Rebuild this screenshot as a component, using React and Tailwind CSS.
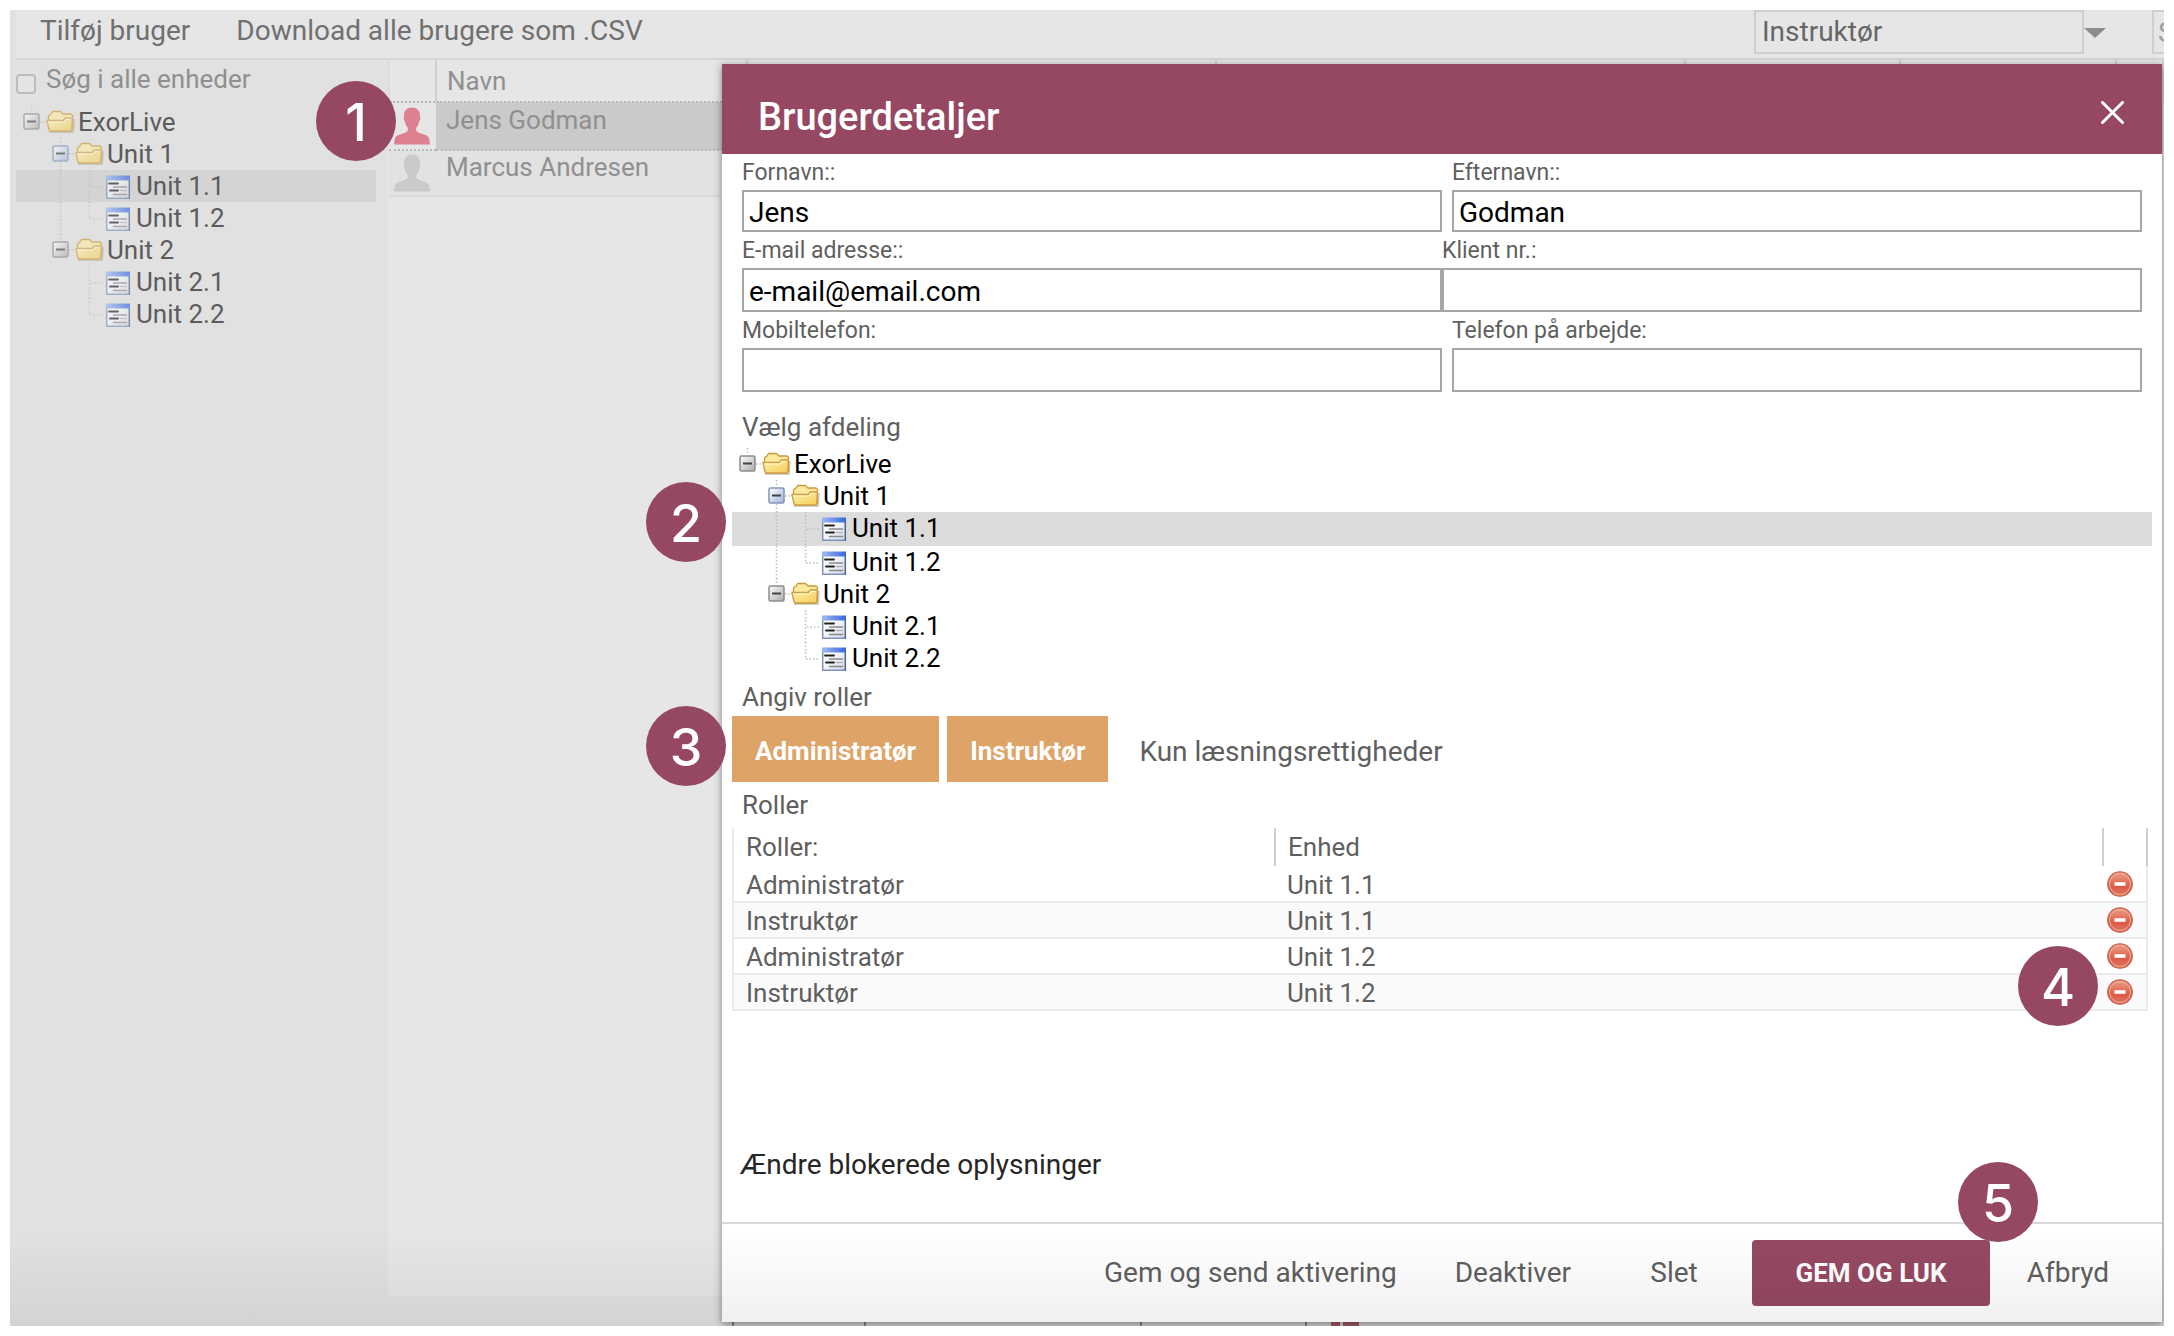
import React, { useState } from 'react';

const UNITS = [
  { id: 'root', label: 'ExorLive', level: 0 },
  { id: 'u1', label: 'Unit 1', level: 1, active: true },
  { id: 'u11', label: 'Unit 1.1', level: 2, leaf: true, rail: true },
  { id: 'u12', label: 'Unit 1.2', level: 2, leaf: true, rail: true, last: true },
  { id: 'u2', label: 'Unit 2', level: 1, last: true },
  { id: 'u21', label: 'Unit 2.1', level: 2, leaf: true },
  { id: 'u22', label: 'Unit 2.2', level: 2, leaf: true, last: true },
];

const USERS = [
  { id: 1, name: 'Jens Godman' },
  { id: 2, name: 'Marcus Andresen' },
];

// columns of the user list that carry no data yet
const EXTRA_COLUMNS = ['c1', 'c2', 'c3', 'c4', 'c5'];

const ROLES = [
  { id: 1, role: 'Administratør', unit: 'Unit 1.1' },
  { id: 2, role: 'Instruktør', unit: 'Unit 1.1' },
  { id: 3, role: 'Administratør', unit: 'Unit 1.2' },
  { id: 4, role: 'Instruktør', unit: 'Unit 1.2' },
];

const GradientDefs = () => (
  <svg width="0" height="0" className="absolute" aria-hidden="true">
    <defs>
      <linearGradient id="folder" x1="0" y1="0" x2="1" y2="1">
        <stop offset="0" stopColor="#fff3b0" />
        <stop offset="1" stopColor="#f3cc58" />
      </linearGradient>
      <linearGradient id="toggle" x1="0" y1="0" x2="1" y2="1">
        <stop offset="0" stopColor="#ffffff" />
        <stop offset="1" stopColor="#a9a9a9" />
      </linearGradient>
      <linearGradient id="toggleActive" x1="0" y1="0" x2="1" y2="1">
        <stop offset="0" stopColor="#ffffff" />
        <stop offset="1" stopColor="#9db4d6" />
      </linearGradient>
      <linearGradient id="sheet" x1="0" y1="0" x2="1" y2="1">
        <stop offset="0.3" stopColor="#ffffff" />
        <stop offset="1" stopColor="#cdd6e6" />
      </linearGradient>
      <linearGradient id="sheetBar" x1="0" y1="0" x2="1" y2="0">
        <stop offset="0" stopColor="#9db9f4" />
        <stop offset="1" stopColor="#3767dc" />
      </linearGradient>
      <linearGradient id="remove" x1="0" y1="0" x2="0" y2="1">
        <stop offset="0" stopColor="#eea48c" />
        <stop offset="0.6" stopColor="#dc5a48" />
        <stop offset="1" stopColor="#e07a62" />
      </linearGradient>
    </defs>
  </svg>
);

const FolderIcon = () => (
  <svg width="32" height="32" viewBox="0 0 32 32" className="shrink-0" aria-hidden="true">
    <path d="M3 26h24l1-13" fill="none" stroke="#000" strokeOpacity="0.18" strokeWidth="2" />
    <path
      d="M2.500 22V10l2.500-2 1.500-2.500h8L17 8h8l1.500 1.500v14L25 25H4z"
      fill="#fbe9a0"
      stroke="#c9973c"
      strokeWidth="1.300"
      strokeLinejoin="round"
    />
    <path d="M.8 14.500h16.500l2-2.500h7l-.5 12-1.300 1H3.500z" fill="url(#folder)" stroke="#cf9f45" strokeWidth="1.300" strokeLinejoin="round" />
    <path d="M2.500 16h15.500l2-2.500h4.500" fill="none" stroke="#fff8cf" strokeWidth="1.200" />
  </svg>
);

const UnitIcon = () => (
  <svg width="32" height="32" viewBox="0 0 32 32" className="shrink-0" aria-hidden="true">
    <path d="M2 6h24v23H2z" fill="url(#sheet)" />
    <path d="M2.700 6v22M2 28.200h24" stroke="#7f92b8" strokeWidth="1.500" />
    <path d="M25.300 6v23" stroke="#4d648f" strokeWidth="1.500" />
    <path d="M2 5.500h24v5H2z" fill="url(#sheetBar)" />
    <path d="M5 13.500h9M6 20.500h8" stroke="#222" strokeWidth="1.800" strokeLinecap="round" />
    <path d="M9.500 17h13M9.500 24.500h13" stroke="#8a8a8a" strokeWidth="1.600" strokeLinecap="round" />
    <path d="M16 20.500h6.500" stroke="#aaa" strokeWidth="1.200" />
  </svg>
);

const ToggleCell = ({ level, active, last }) => (
  <svg width="29" height="32" viewBox="0 0 29 32" className="shrink-0 overflow-visible" aria-hidden="true">
    <g stroke="#bdbdbd" strokeWidth="1.500" strokeDasharray="1.500 2">
      <path d="M14.500 0v6M23 16h5" />
      {level > 0 && !last && <path d="M14.500 24v10" />}
    </g>
    <rect x="7" y="8" width="15" height="15" rx="1.500" fill={active ? 'url(#toggleActive)' : 'url(#toggle)'} stroke={active ? '#8296b8' : '#8c8c8c'} strokeWidth="1.500" />
    <path d="M10 15.500h9" stroke="#444" strokeWidth="2" />
  </svg>
);

const LineCell = ({ kind }) => (
  <svg width="29" height="32" viewBox="0 0 29 32" className="shrink-0 overflow-visible" aria-hidden="true">
    <g fill="none" stroke="#bdbdbd" strokeWidth="1.500" strokeDasharray="1.500 2">
      {kind === 'rail' && <path d="M14.500 0v33" />}
      {kind === 'tee' && <path d="M14.500 0v33M16 17h12" />}
      {kind === 'elbow' && <path d="M14.500 0v17h13" />}
    </g>
  </svg>
);

const PersonIcon = ({ className }) => (
  <svg width="36" height="38" viewBox="0 0 36 38" className={className} aria-hidden="true">
    <path
      fill="currentColor"
      d="M18 .5c5.200 0 8 3.300 8 8.200 0 1.300.3 1.800.3 3.100 0 1.600-1 2.200-1.300 3.400-.5 2.300-1.400 3.800-2.700 5.300-.5 2.500.2 4.200 1.900 5 3.300 1.500 8.600 2 10.300 4.700 1.100 1.800 1.300 4.500 1.300 7.300H.2c0-2.800.2-5.500 1.300-7.300 1.700-2.700 7-3.200 10.300-4.700 1.700-.8 2.400-2.500 1.900-5-1.300-1.500-2.200-3-2.700-5.300-.3-1.200-1.300-1.800-1.300-3.400 0-1.300.3-1.800.3-3.100 0-4.900 2.800-8.200 8-8.200z"
    />
  </svg>
);

const RemoveIcon = () => (
  <svg width="26" height="26" viewBox="0 0 26 26" aria-hidden="true">
    <circle cx="13" cy="13" r="12.200" fill="url(#remove)" stroke="#c9604e" strokeWidth="1.300" />
    <circle cx="13" cy="13" r="10.500" fill="none" stroke="#f0b0a0" strokeWidth="1" />
    <path d="M7.500 13h11" stroke="#fff" strokeWidth="3.600" />
  </svg>
);

const Badge = ({ children, className }) => (
  <span
    className={`absolute z-20 flex size-20 items-center justify-center rounded-full bg-[#964863] pt-1 font-[Inter,sans-serif] text-[52px] leading-none font-medium text-white ${className}`}
  >
    {children}
  </span>
);

const UnitTree = ({ selected, onSelect, selectedClass, badge }) => (
  <ul>
    {UNITS.map((unit) => (
      <li key={unit.id} className={`relative ${unit.id === selected ? selectedClass : 'h-8'}`}>
        {unit.id === selected && badge}
        <button type="button" onClick={() => onSelect(unit.id)} className="flex h-8 w-full items-center pl-px text-left">
          {unit.level > 0 && <LineCell kind="none" />}
          {unit.level > 1 && <LineCell kind={unit.rail ? 'rail' : 'none'} />}
          {unit.leaf ? (
            <LineCell kind={unit.last ? 'elbow' : 'tee'} />
          ) : (
            <ToggleCell level={unit.level} active={unit.active} last={unit.last} />
          )}
          {unit.leaf ? <UnitIcon /> : <FolderIcon />}
          <span className="text-[26px] leading-8">{unit.label}</span>
        </button>
      </li>
    ))}
  </ul>
);

const Field = ({ id, label, defaultValue, className, inputClass }) => (
  <div className={className}>
    <label htmlFor={id} className="flex h-9 items-center text-[23px] leading-none text-[#5f5f5f]">
      {label}
    </label>
    <input
      id={id}
      type="text"
      defaultValue={defaultValue}
      className={`block w-full border-2 border-[#a6a6a6] bg-white px-[5px] pt-0.5 text-[28px] leading-none text-black outline-none ${inputClass}`}
    />
  </div>
);

const UserAdmin = () => {
  const [unit, setUnit] = useState('u11');

  return (
    <div className="flex min-w-0 flex-col bg-[#e1e1e1] pl-1.5 [grid-area:1/1]">
      <header className="flex h-[50px] items-center border-b-2 border-[#d6d6d6] bg-[#e6e6e6] text-[28px] leading-none text-[#707070]">
        <button type="button" className="px-6 pb-1.5">Tilføj bruger</button>
        <button type="button" className="px-[22px] pb-1.5">Download alle brugere som .CSV</button>
        <div className="ml-auto flex h-full items-start">
          <select
            aria-label="Rolle"
            defaultValue="Instruktør"
            className="h-11 w-[330px] appearance-none border-2 border-[#cecece] bg-transparent px-1.5 text-[#666]"
          >
            <option>Instruktør</option>
          </select>
          <svg width="22" height="44" viewBox="0 0 22 44" className="mr-[46px]" aria-hidden="true">
            <path d="M0 18h22L11 28z" fill="#8c8c8c" />
          </svg>
          {/* runs past the window's right edge */}
          <input
            type="text"
            aria-label="Søg"
            placeholder="Søg"
            className="-mr-[188px] h-11 w-[200px] border-2 border-[#cecece] bg-transparent pl-1 outline-none placeholder:text-[#a0a0a0]"
          />
        </div>
      </header>

      <div className="flex flex-1">
        <aside className="w-[372px] shrink-0 pr-3 text-[#5c5c5c]">
          <label className="flex h-[46px] items-center gap-2.5 text-[26px] leading-none text-[#8f8f8f]">
            <input type="checkbox" className="mt-0.5 size-5 shrink-0 appearance-none rounded-sm border-2 border-[#bcbcbc] bg-[#e4e4e4]" />
            <span className="pb-2">Søg i alle enheder</span>
          </label>
          <div className="[&_span]:text-[#5c5c5c] [&_svg]:opacity-65">
            <UnitTree selected={unit} onSelect={setUnit} selectedClass="h-8 bg-[#d4d4d4]" />
          </div>
        </aside>

        <section className="flex min-w-0 flex-1 flex-col">
          <div className="flex-1 bg-[#e6e6e6]">
            <table className="w-full table-fixed border-collapse text-left text-[26px] leading-none text-[#909090]">
              <colgroup>
                <col className="w-[47px]" />
                <col className="w-[311px]" />
                <col className="w-[469px]" />
                <col className="w-[469px]" />
                <col className="w-[215px]" />
                <col className="w-[216px]" />
                <col />
              </colgroup>
              <thead>
                <tr className="h-[42px]">
                  <th className="border-r-2 border-l-2 border-[#d0d0d0] border-l-[#dcdcdc]" aria-label="Status"></th>
                  <th className="border-r-2 border-[#d0d0d0] pl-2.5 font-normal">Navn</th>
                  {EXTRA_COLUMNS.map((col) => (
                    <th key={col} className="border-r-2 border-[#d0d0d0]"></th>
                  ))}
                </tr>
              </thead>
              <tbody>
                {USERS.map((user, i) => (
                  <tr key={user.id} className={i === 0 ? 'h-[48px] border-y-2 border-dotted border-[#b8b8b8]' : 'h-[46px] border-b-2 border-[#dbdbdb] bg-[#e2e2e2]'}>
                    <td className="relative pl-[5px]">
                      {i === 0 && <Badge className="-top-[22px] -left-[73px]">1</Badge>}
                      <PersonIcon className={i === 0 ? 'text-[#dd8090]' : 'text-[#cacaca]'} />
                    </td>
                    <td className={i === 0 ? 'bg-[#cacaca] pb-3 pl-2.5' : 'pb-3 pl-2.5'}>{user.name}</td>
                    <td colSpan={5} className={i === 0 ? 'bg-[#cacaca]' : ''}></td>
                  </tr>
                ))}
              </tbody>
            </table>
          </div>

          <div className="flex h-[30px] pl-[344px]">
            <div className="w-[132px] border-l-2 border-[#8c8c8c]"></div>
            <div className="w-[276px] border-l-2 border-[#8c8c8c]"></div>
            <div className="w-[165px] border-l-2 border-[#8c8c8c]"></div>
            <div className="flex gap-[3px] border-l-2 border-[#8c8c8c] pl-6">
              <span className="w-[9px] bg-[#b06070]"></span>
              <span className="w-4 bg-[#b06070]"></span>
            </div>
          </div>
        </section>
      </div>
    </div>
  );
};

const UserDialog = () => {
  const [unit, setUnit] = useState('u11');
  const [roles, setRoles] = useState(ROLES);

  const removeRole = (id) => setRoles((prev) => prev.filter((r) => r.id !== id));

  return (
    <div
      role="dialog"
      aria-labelledby="dialog-title"
      className="relative z-10 mt-[54px] mr-0.5 mb-1 ml-[712px] flex min-w-0 flex-col bg-white text-[#5f5f5f] shadow-[0_2px_8px_rgba(0,0,0,0.45)] [grid-area:1/1]"
    >
      <header className="flex h-[90px] items-center justify-between bg-[#964863] pr-[38px] pl-9 text-white">
        <h2 id="dialog-title" className="pt-4 text-[38px] leading-none font-medium">Brugerdetaljer</h2>
        <button type="button" aria-label="Luk" className="pt-1.5">
          <svg width="23" height="23" viewBox="0 0 23 23" aria-hidden="true">
            <path d="M1.500 1.500l20 20M21.500 1.500l-20 20" stroke="#fff" strokeWidth="3" strokeLinecap="round" />
          </svg>
        </button>
      </header>

      <form className="flex flex-1 flex-col" onSubmit={(e) => e.preventDefault()}>
        <div className="grid grid-cols-2 px-5">
          <Field id="first-name" label="Fornavn::" defaultValue="Jens" inputClass="h-[42px]" />
          <Field id="last-name" label="Efternavn::" defaultValue="Godman" className="pl-2.5" inputClass="h-[42px]" />
          <Field id="email" label="E-mail adresse::" defaultValue="e-mail@email.com" inputClass="h-11" />
          <Field id="client-no" label="Klient nr.:" inputClass="h-11" />
          <Field id="mobile" label="Mobiltelefon:" inputClass="h-11" />
          <Field id="work-phone" label="Telefon på arbejde:" className="pl-2.5" inputClass="h-11" />
        </div>

        <h3 className="mt-4 mb-1 flex h-9 items-center px-5 pt-0.5 text-[26px] leading-none">Vælg afdeling</h3>
        <div className="px-2.5 text-black">
          <UnitTree
            selected={unit}
            onSelect={setUnit}
            selectedClass="h-[34px] bg-[#dcdcdc]"
            badge={<Badge className="-top-[30px] -left-[86px]">2</Badge>}
          />
        </div>

        <h3 className="flex h-[42px] items-center px-5 pt-1 text-[26px] leading-none">Angiv roller</h3>
        <div className="relative flex gap-2 px-2.5 text-[26px] leading-none">
          <Badge className="-top-2.5 -left-[76px]">3</Badge>
          <button type="button" className="h-[66px] bg-[#dea366] px-[23px] pt-1 font-bold text-white">Administratør</button>
          <button type="button" className="h-[66px] bg-[#dea366] px-[23px] pt-1 font-bold text-white">Instruktør</button>
          <button type="button" className="h-[66px] px-[23px] pt-1.5 text-[28px]">Kun læsningsrettigheder</button>
        </div>

        <h3 className="flex h-[46px] items-center px-5 text-[26px] leading-none">Roller</h3>
        <div className="relative pr-3.5 pl-2.5">
          <Badge className="top-[118px] right-16">4</Badge>
          <table className="w-full table-fixed border-collapse text-left text-[26px] leading-none">
            <colgroup>
              <col className="w-[542px]" />
              <col />
              <col className="w-11" />
            </colgroup>
            <thead>
              <tr className="h-[38px]">
                <th className="border-r-2 border-l-2 border-[#cfcfcf] border-l-[#ebebeb] pl-3 font-normal">Roller:</th>
                <th className="border-r-2 border-[#cfcfcf] pl-3 font-normal">Enhed</th>
                <th className="border-r-2 border-[#cfcfcf]" aria-label="Slet"></th>
              </tr>
            </thead>
            <tbody>
              {roles.map((row) => (
                <tr key={row.id} className="h-9 border-x-2 border-b-2 border-[#ebebeb] even:bg-[#fafafa]">
                  <td className="pt-0.5 pl-3">{row.role}</td>
                  <td className="pt-0.5 pl-3">{row.unit}</td>
                  <td>
                    <button type="button" aria-label={`Slet ${row.role}`} onClick={() => removeRole(row.id)} className="ml-1 block">
                      <RemoveIcon />
                    </button>
                  </td>
                </tr>
              ))}
            </tbody>
          </table>
        </div>

        <button type="button" className="mt-auto mb-10 h-9 self-start px-[18px] pt-0.5 text-[28px] leading-none text-[#262626]">
          Ændre blokerede oplysninger
        </button>

        <footer className="relative flex justify-end gap-2 border-t-2 border-[#d9d9d9] py-4 pr-6 text-[28px] leading-none">
          <Badge className="-top-[62px] right-[124px]">5</Badge>
          <button type="button" className="h-[66px] min-w-[140px] px-[25px]">Gem og send aktivering</button>
          <button type="button" className="h-[66px] min-w-[140px] px-[25px]">Deaktiver</button>
          <button type="button" className="h-[66px] min-w-[140px] px-[25px]">Slet</button>
          <button type="submit" className="h-[66px] w-[238px] rounded bg-[#964863] text-[26px] font-bold text-white">GEM OG LUK</button>
          <button type="button" className="h-[66px] min-w-[140px] px-[25px]">Afbryd</button>
        </footer>
      </form>
    </div>
  );
};

const App = () => (
  <div className="flex min-h-screen bg-white p-2.5 font-[Roboto,sans-serif]">
    <GradientDefs />
    <main className="relative grid w-full grid-cols-1 overflow-hidden">
      <UserAdmin />
      <UserDialog />
      {/* fade along the lower edge of the window */}
      <div className="pointer-events-none absolute inset-x-0 bottom-0 z-10 h-24 bg-linear-to-b from-transparent to-black/6" />
    </main>
  </div>
);

export default App;
